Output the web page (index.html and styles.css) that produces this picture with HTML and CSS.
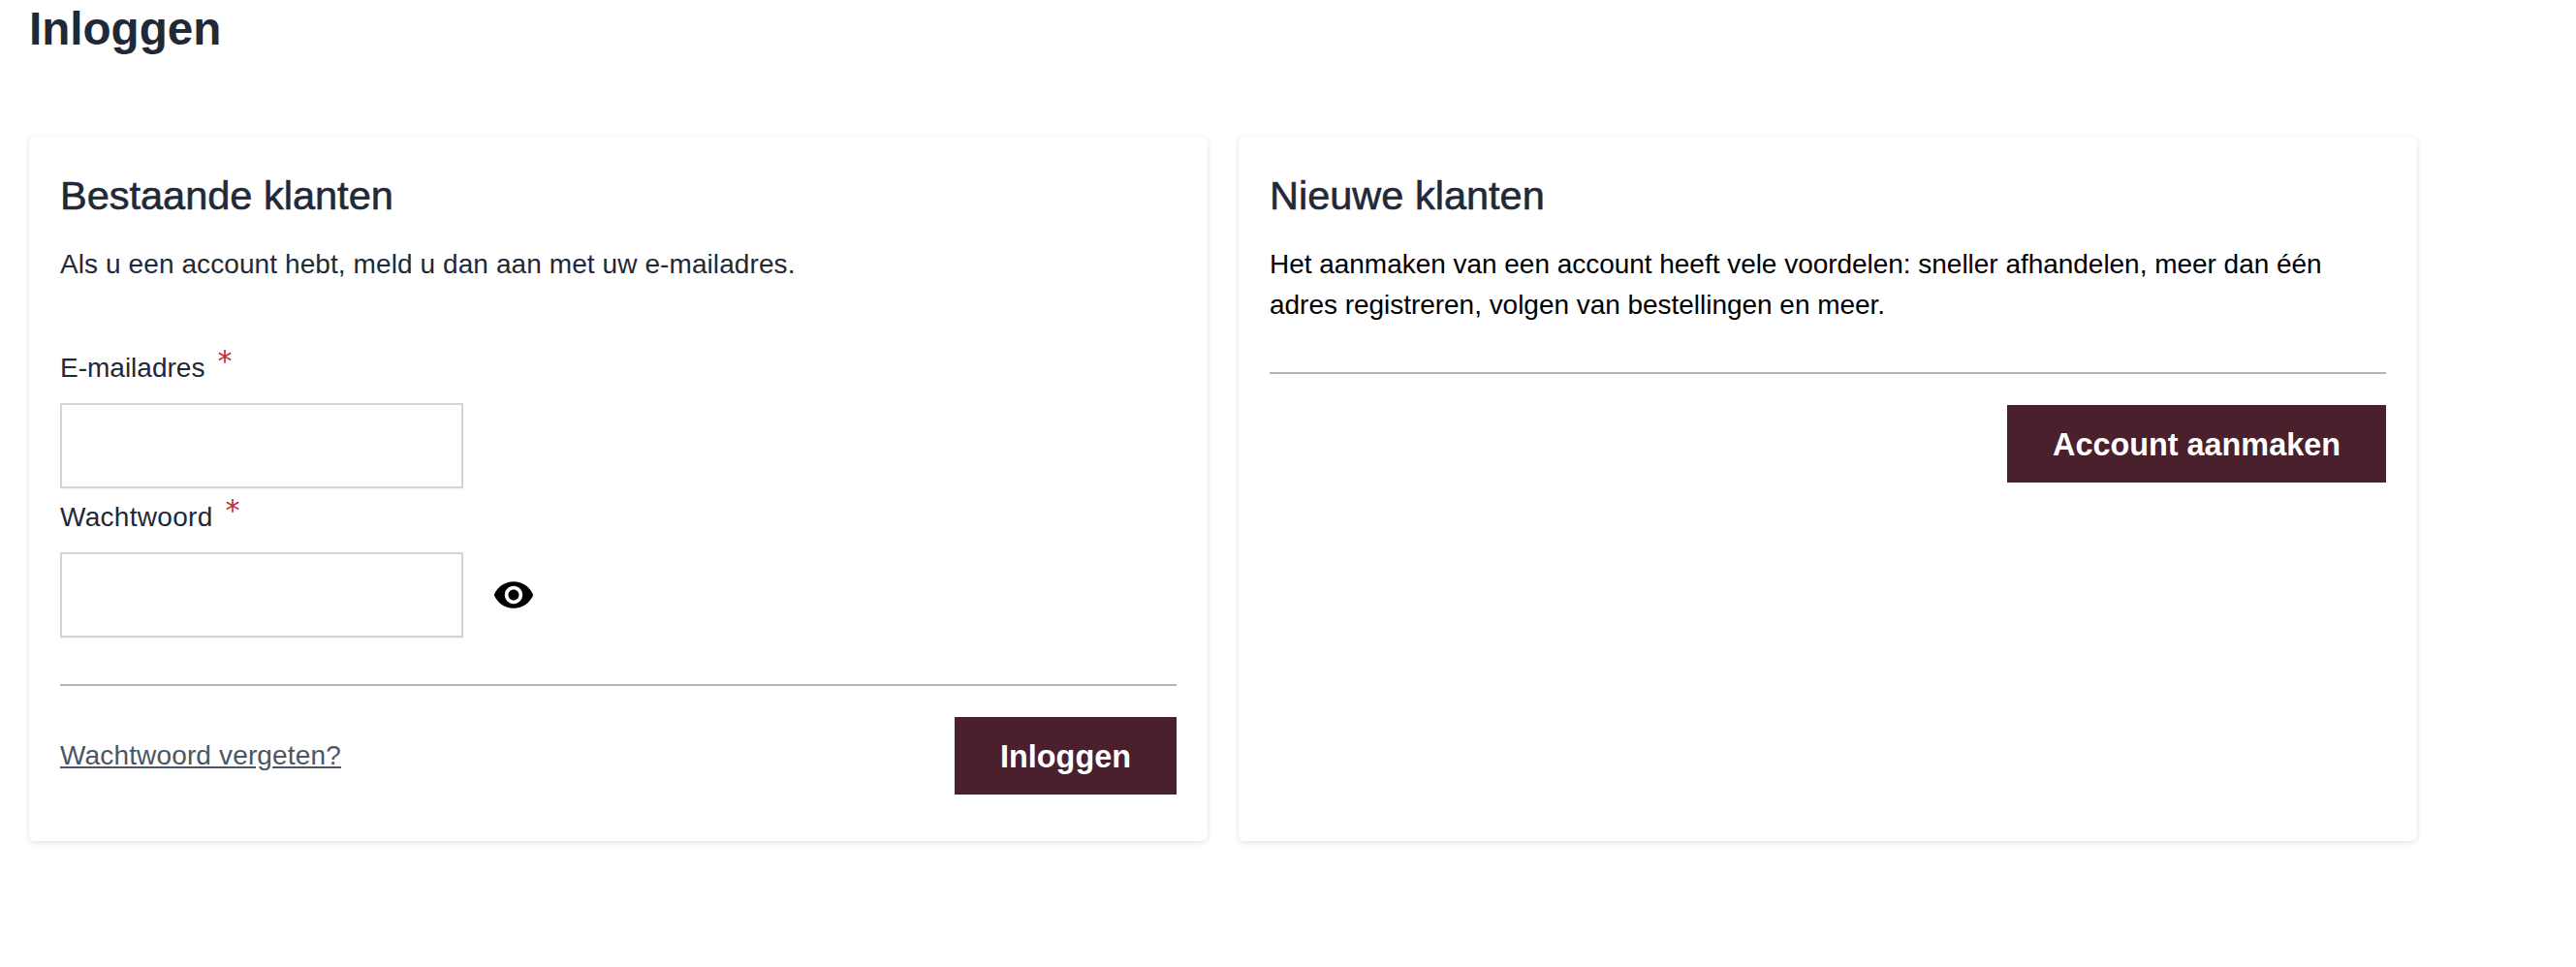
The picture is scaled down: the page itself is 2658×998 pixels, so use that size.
FILE: index.html
```html
<!DOCTYPE html>
<html lang="nl">
<head>
    <meta charset="UTF-8">
    <meta name="viewport" content="width=device-width, initial-scale=1.0">
    <title>Inloggen</title>
    <link rel="stylesheet" href="styles.css">
</head>
<body>
    <div class="page">
        <h1 class="page-title">Inloggen</h1>
        <div class="columns">
            <form class="card">
                <h2 class="card-title">Bestaande klanten</h2>
                <p class="intro intro-login">Als u een account hebt, meld u dan aan met uw e-mailadres.</p>
                <div class="fields">
                    <label class="field-label" for="email">E-mailadres<span class="required">*</span></label>
                    <input class="field-input" id="email" type="email">
                    <label class="field-label field-label-next" for="pass">Wachtwoord<span class="required">*</span></label>
                    <div class="password-row">
                        <input class="field-input" id="pass" type="password">
                        <svg class="eye" viewBox="0 0 24 24" aria-hidden="true">
                            <path d="M12 4.5C7 4.5 2.73 7.61 1 12c1.73 4.39 6 7.5 11 7.5s9.27-3.11 11-7.5c-1.73-4.39-6-7.5-11-7.5zM12 17c-2.76 0-5-2.24-5-5s2.24-5 5-5 5 2.24 5 5-2.24 5-5 5zm0-8c-1.66 0-3 1.34-3 3s1.34 3 3 3 3-1.34 3-3-1.34-3-3-3z"/>
                        </svg>
                    </div>
                </div>
                <div class="actions">
                    <a class="forgot" href="#">Wachtwoord vergeten?</a>
                    <button class="btn" type="button">Inloggen</button>
                </div>
            </form>
            <div class="card">
                <h2 class="card-title">Nieuwe klanten</h2>
                <p class="intro intro-black">Het aanmaken van een account heeft vele voordelen: sneller afhandelen, meer dan één adres registreren, volgen van bestellingen en meer.</p>
                <div class="actions actions-end">
                    <button class="btn" type="button">Account aanmaken</button>
                </div>
            </div>
        </div>
    </div>
</body>
</html>
```

FILE: styles.css
```css
body {
    margin: 0;
    min-height: 100vh;
    background-color: #fff;
    font-family: "Liberation Sans", Arial, sans-serif;
    color: #1f2937;
}
.page {
    width: 2464px;
    padding-left: 30px;
}
.page-title {
    margin: 0;
    height: 141px;
    font-size: 47.6px;
    line-height: 60px;
    font-weight: 700;
}
.columns {
    display: grid;
    grid-template-columns: 1fr 1fr;
    gap: 32px;
}
.card {
    display: block;
    height: 727px;
    box-sizing: border-box;
    padding: 32px;
    background-color: #fff;
    border-radius: 6px;
    box-shadow: 0 2px 6px rgba(0, 0, 0, 0.1), 0 0 4px rgba(0, 0, 0, 0.03);
}
.card-title {
    margin: 0 0 21px;
    font-size: 41.5px;
    line-height: 58px;
    font-weight: 400;
    -webkit-text-stroke: 0.6px #1f2937;
}
.intro {
    margin: 0;
    font-size: 28px;
    line-height: 42px;
}
.intro-login {
    letter-spacing: 0.09px;
}
.intro-black {
    color: #000;
    letter-spacing: -0.03px;
}
.fields {
    margin-top: 64px;
}
.field-label {
    display: block;
    height: 42px;
    font-size: 28px;
    line-height: 42px;
    margin-bottom: 16px;
}
.field-label-next {
    padding-top: 8px;
    letter-spacing: 0.3px;
}
.required {
    margin-left: 13px;
    font-family: "DejaVu Sans", sans-serif;
    color: #c53030;
    font-size: 30px;
    line-height: 1;
    vertical-align: 6px;
}
.field-input {
    display: block;
    box-sizing: border-box;
    width: 416px;
    height: 88px;
    border: 2px solid #d1d5db;
    border-radius: 0;
    background-color: #fff;
    box-shadow: 0 1px 2px rgba(0, 0, 0, 0.05);
    padding: 0 16px;
}
.password-row {
    display: flex;
    align-items: center;
    gap: 30px;
}
.eye {
    width: 44px;
    height: 44px;
    fill: #000;
}
.actions {
    display: flex;
    justify-content: space-between;
    align-items: center;
    margin-top: 48px;
    padding-top: 32px;
    border-top: 2px solid #b3b3b3;
}
.actions-end {
    justify-content: flex-end;
}
.forgot {
    font-size: 28px;
    letter-spacing: 0.15px;
    color: #4b5563;
}
.btn {
    height: 80px;
    padding: 2px 47px 0;
    border: none;
    background-color: #4a202c;
    color: #fff;
    font-family: inherit;
    font-size: 32.4px;
    font-weight: 700;
}
```
